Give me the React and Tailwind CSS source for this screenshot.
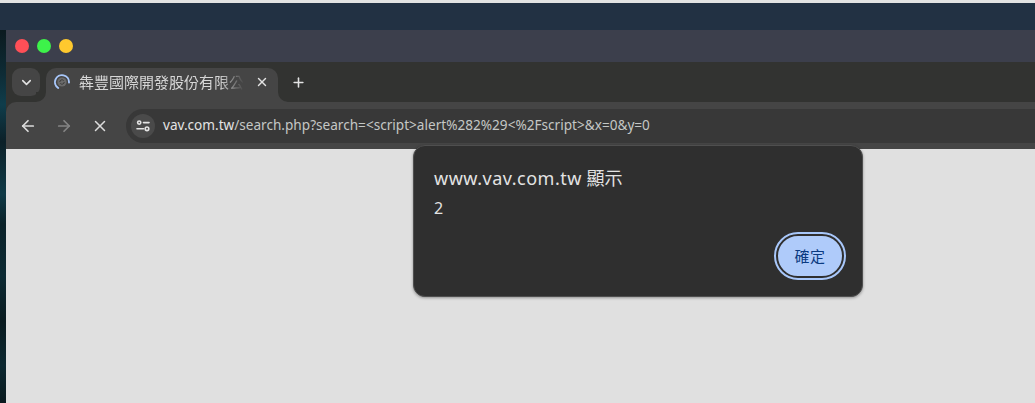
import React from 'react';
import { ChevronDown, X, Plus, ArrowLeft, ArrowRight } from 'lucide-react';

const uiFont = { fontFamily: '"Noto Sans", "Noto Sans CJK TC", sans-serif' };

const SiteIcon = () => (
  <svg width="16" height="16" viewBox="0 0 16 16" fill="none" stroke="#e4e4e4" strokeWidth="1.6" strokeLinecap="round">
    <circle cx="4.2" cy="4.6" r="1.6" />
    <path d="M8.5 4.6h5.5" />
    <path d="M2 10.8h6.5" />
    <circle cx="12" cy="10.8" r="1.8" />
  </svg>
);

const TabSpinner = () => (
  <svg width="16" height="16" viewBox="0 0 16 16" fill="none" className="shrink-0">
    <circle cx="8" cy="8" r="4.6" fill="#6a6a6a" />
    <path d="M5.8 8a2.2 2.2 0 0 1 3.9-1.4M10.2 8a2.2 2.2 0 0 1-3.9 1.4" stroke="#3a3a3a" strokeWidth="1" />
    <path d="M15 8.5A7 7 0 1 0 4.2 14" stroke="#a8c7fa" strokeWidth="1.9" strokeLinecap="round" />
  </svg>
);

const Dot = ({ className }) => <div className={`w-[14px] h-[14px] rounded-full ${className}`} />;

const App = () => {
  return (
    <div className="relative w-[1035px] h-[403px] overflow-hidden flex flex-col bg-[#e0e0e0]" style={uiFont}>
      <div className="h-[3px] bg-[#e3e3e3]" />
      <div className="h-[27px] bg-[#223143]" />
      <div className="flex flex-1 min-h-0">
        <div className="w-[6px] bg-[linear-gradient(180deg,#0b1a1f_0%,#0e2c36_12%,#0f3d4b_20%,#0c2028_30%,#0f3a47_44%,#0b2229_52%,#0c2a33_66%,#0a1b20_78%,#0c2830_90%,#0a1a1f_100%)]" />
        <div className="flex-1 flex flex-col min-w-0">
          {/* title bar */}
          <div className="h-[32px] bg-[#3c3f4c] flex items-center gap-[8px] pl-[9px]">
            <Dot className="bg-[#ff4f57]" />
            <Dot className="bg-[#3df24a]" />
            <Dot className="bg-[#ffc92e]" />
          </div>

          {/* tab strip */}
          <div className="h-[40px] bg-[#323331] flex items-end pl-[6px]">
            <div className="w-[28px] h-[28px] mb-[6px] rounded-[9px] bg-[#454545] flex items-center justify-center text-[#e3e3e3]">
              <ChevronDown size={15} strokeWidth={2.5} />
            </div>
            <div className="relative ml-[6px] w-[232px] h-[34px] rounded-t-[10px] bg-[#454545] flex items-center pl-[8px] pr-[8px] pb-[6px]">
              <div className="absolute -left-[10px] bottom-0 w-[10px] h-[10px] bg-[#454545]">
                <div className="w-full h-full bg-[#323331] rounded-br-[10px]" />
              </div>
              <div className="absolute -right-[10px] bottom-0 w-[10px] h-[10px] bg-[#454545]">
                <div className="w-full h-full bg-[#323331] rounded-bl-[10px]" />
              </div>
              <TabSpinner />
              <span className="ml-[9px] w-[165px] overflow-hidden whitespace-nowrap text-[15px] leading-[20px] text-[#d6d6d6] [mask-image:linear-gradient(90deg,#000_85%,transparent_100%)]">
                犇豐國際開發股份有限公
              </span>
              <X size={14} strokeWidth={2.5} className="ml-auto mr-[1px] text-[#e3e3e3]" />
            </div>
            <div className="ml-[13px] mb-[12px] text-[#e3e3e3]">
              <Plus size={15} strokeWidth={2.5} />
            </div>
          </div>

          {/* toolbar */}
          <div className="bg-[#323331]">
            <div className="h-[47px] bg-[#454545] rounded-tl-[10px] flex items-center">
              <ArrowLeft size={18} strokeWidth={2.3} className="ml-[13px] text-[#dcdcdc]" />
              <ArrowRight size={18} strokeWidth={2.3} className="ml-[18px] text-[#848484]" />
              <X size={18} strokeWidth={2} className="ml-[18px] text-[#dcdcdc]" />
              <div className="ml-[17px] flex-1 h-[34px] rounded-l-full bg-[#383838] flex items-center pl-[5px]">
                <div className="w-[24px] h-[24px] rounded-full bg-[#4a4a4a] flex items-center justify-center">
                  <SiteIcon />
                </div>
                <span className="ml-[8px] -mt-[2px] text-[13.6px] leading-[18px] whitespace-nowrap text-[#c4c7c5]">
                  <span className="text-[#e3e3e3]">vav.com.tw</span>
                  /search.php?search=&lt;script&gt;alert%282%29&lt;%2Fscript&gt;&amp;x=0&amp;y=0
                </span>
              </div>
            </div>
          </div>

          {/* page */}
          <div className="flex-1 bg-[#e0e0e0]" />
        </div>
      </div>

      {/* alert dialog */}
      <div className="absolute left-[413px] top-[145px] w-[450px] h-[152px] rounded-[12px] bg-[#2f2f2f] border border-[#4f4f4f] shadow-[0_1px_3px_rgba(0,0,0,0.35)] pl-[20px] pr-[18px] pt-[20px]">
        <div className="text-[18px] leading-[24px] text-[#e3e3e3]">
          <span className="tracking-[0.5px]">www.vav.com.tw</span> 顯示
        </div>
        <div className="mt-[7px] text-[16px] leading-[22px] text-[#e3e3e3]">2</div>
        <div className="mt-[15px] flex justify-end">
          <button className="w-[68px] h-[44px] rounded-full bg-[#afcbfa] border-2 border-[#2f2f2f] outline-2 outline-[#a8c7fa] text-[15px] tracking-[0.5px] text-[#0a3a80]">
            確定
          </button>
        </div>
      </div>
    </div>
  );
};

export default App;
